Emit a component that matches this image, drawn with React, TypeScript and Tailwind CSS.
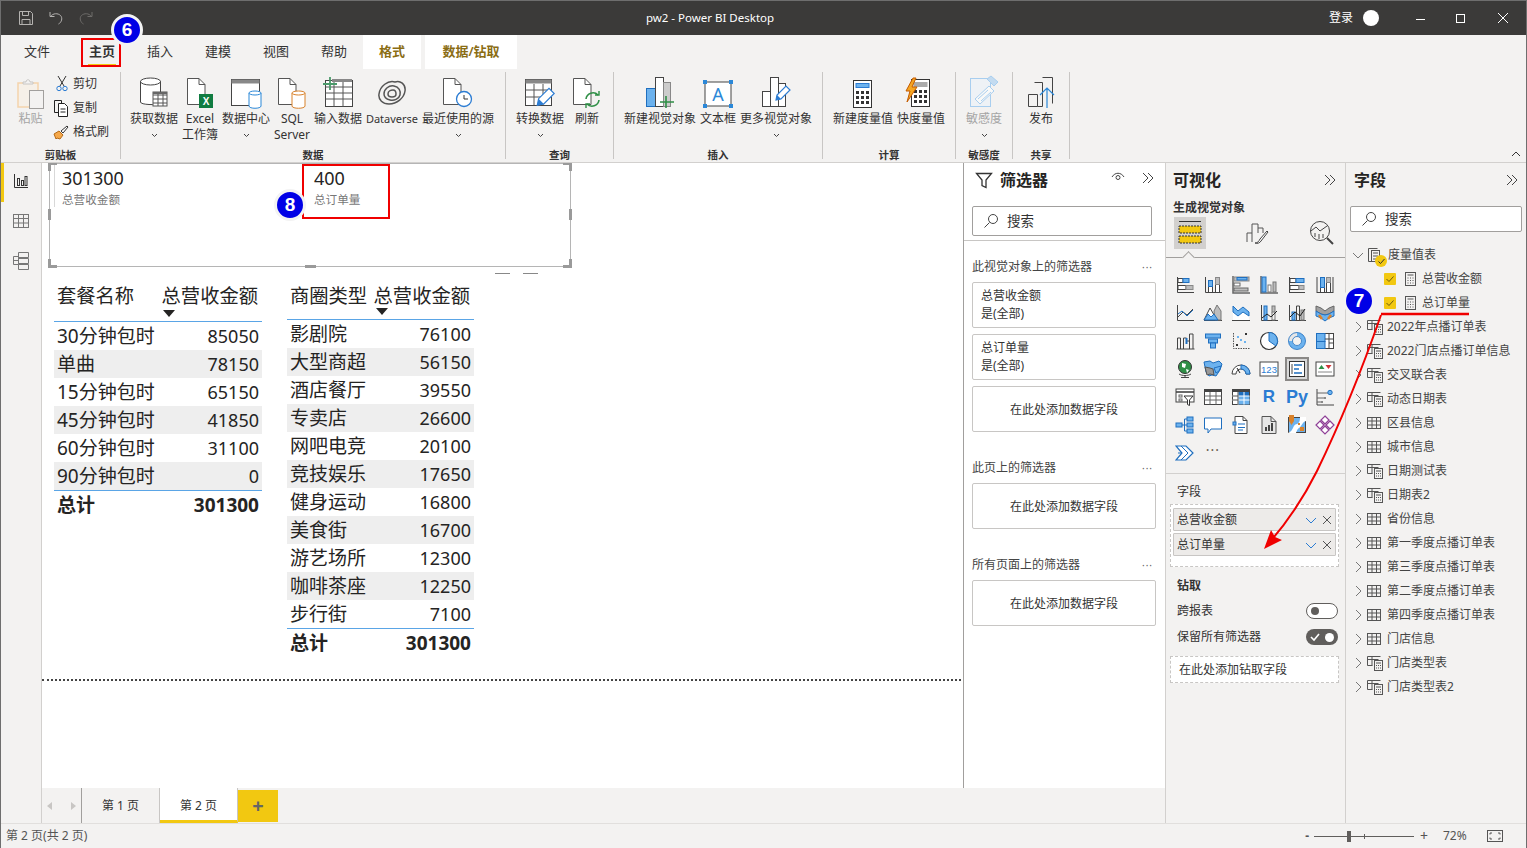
import React from 'react';

const B = '#6cb2ee';
const D = '#1f6fbf';
const K = '#444';
const G = '#bdbdbd';

function Ico({ s = 20, w, h, children, className }: { s?: number; w?: number; h?: number; children: React.ReactNode; className?: string }) {
  const vw = w ?? s;
  const vh = h ?? s;
  return (
    <svg width={vw} height={vh} viewBox={`0 0 ${vw} ${vh}`} fill="none" stroke={K} strokeWidth="1" className={className}>
      {children}
    </svg>
  );
}

const Axis = () => <path d="M2.500 2v15.500H19" stroke="#444" />;

// visual gallery, 6 per row
const vizIcons: React.ReactNode[] = [
  <><Axis /><rect x="3" y="3.500" width="5" height="4" fill="#fff" /><rect x="8" y="3.500" width="6" height="4" fill={B} stroke={D} /><rect x="3" y="10.500" width="8" height="4" fill="#fff" /><rect x="11" y="10.500" width="7" height="4" fill={G} stroke="#888" /></>,
  <><Axis /><rect x="5.500" y="5.500" width="4" height="12" fill="#fff" /><rect x="5.500" y="5.500" width="4" height="6" fill={B} stroke={D} /><rect x="12.500" y="2.500" width="4" height="15" fill="#fff" /><rect x="12.500" y="2.500" width="4" height="7" fill={G} stroke="#888" /></>,
  <><path d="M2 1v17h17" stroke="#666" strokeWidth="1.500" /><rect x="3" y="2" width="15" height="4" fill={G} stroke="#888" /><rect x="6" y="2.500" width="10" height="2.500" fill={B} stroke={D} /><rect x="3" y="8" width="6" height="3" fill="#fff" stroke="#666" /><rect x="3" y="13" width="14" height="3" fill={G} stroke="#666" /></>,
  <><path d="M2 1v17h17" stroke="#666" strokeWidth="1.500" /><rect x="3" y="2" width="4" height="15" fill={B} stroke={D} /><rect x="9" y="10" width="3" height="7" fill="#fff" stroke="#777" /><rect x="14" y="7" width="3" height="10" fill={G} stroke="#777" /></>,
  <><path d="M2.500 2v15.500" stroke="#444" /><path d="M2 17.500h16" stroke="#444" /><rect x="3" y="3.500" width="6" height="4" fill="#fff" /><rect x="9" y="3.500" width="8" height="4" fill={B} stroke={D} /><rect x="3" y="10.500" width="9" height="4" fill="#fff" /><rect x="12" y="10.500" width="5" height="4" fill={G} stroke="#888" /></>,
  <><path d="M2 2v16M18 2v16M2 17.500h16" stroke="#444" /><rect x="5.500" y="2.500" width="4" height="15" fill="#fff" /><rect x="5.500" y="2.500" width="4" height="10" fill={B} stroke={D} /><rect x="11.500" y="2.500" width="4" height="15" fill="#fff" /><rect x="11.500" y="2.500" width="4" height="5" fill={G} stroke="#888" /></>,

  <><Axis /><path d="M3 14l5-5 4 3 6-6" stroke="#444" /><path d="M3 11l4-3 5 5 6-6" stroke={D} /></>,
  <><path d="M1 17.500h18" stroke="#444" /><path d="M11 8l3-6 4 6v9h-6z" fill={G} stroke="#777" /><path d="M1 17l6-12 7 12z" fill="#fff" stroke="#444" /><path d="M1 17l4-6 3 3 3-3 4 6z" fill={B} stroke={D} /></>,
  <><path d="M1 17.500h18" stroke="#444" /><path d="M2 3l5 6 5-3 6 4v7H2z" fill="#fff" stroke="none" /><path d="M2 3l5 5 5-4 6 5v4l-6-4-5 4-5-4z" fill={B} stroke={D} /></>,
  <><Axis /><rect x="5" y="3" width="3" height="14" fill={B} stroke={D} /><rect x="13" y="3" width="3" height="6" fill={G} stroke="#777" /><path d="M13 9v8h3V9" stroke="#777" /><path d="M3 15l5-4 4 3 6-6" stroke="#222" /></>,
  <><Axis /><rect x="5" y="9" width="3" height="8" fill={B} stroke={D} /><path d="M9.500 17V3h3v14" stroke="#444" /><rect x="14" y="7" width="3" height="10" fill={G} stroke="#777" /><path d="M3 14l5-5 5 4 5-7" stroke="#222" /></>,
  <><path d="M1 3l5 2 4 3 4-3 5-2v5l-5 3-4 1-4-1-5-3z" fill="#a0a0a0" stroke="#666" /><path d="M1 8l5 3 4 1 4-1 5-3v5l-5 2-4 3-4-3-5-2z" fill={B} stroke={D} /><path d="M4 12l3 4M16 12l-3 4" stroke="#d9822b" strokeWidth="2.500" /></>,

  <><path d="M1.500 18h18" stroke="#444" /><path d="M2.500 18V7h3v11M8.500 18V7h3v3h3v8" stroke="#444" /><path d="M14.500 10V3h3.500v15" stroke="#444" /><rect x="10.500" y="7" width="2" height="6" fill={D} stroke="none" /></>,
  <><rect x="2.500" y="3" width="15" height="4" fill={B} stroke={D} /><rect x="5.500" y="8" width="9" height="4" fill={B} stroke={D} /><rect x="7.500" y="12" width="5" height="5" fill={B} stroke={D} /></>,
  <><path d="M2.500 2v15.500H19" stroke="#555" strokeDasharray="1.500 1" /><rect x="6" y="5" width="2" height="2" fill={B} stroke="none" /><rect x="9" y="8" width="2" height="2" fill={B} stroke="none" /><rect x="14" y="2" width="2" height="2" fill="#333" stroke="none" /><rect x="5" y="13" width="2" height="2" fill="#333" stroke="none" /><rect x="13" y="10" width="2" height="2" fill={B} stroke="none" /></>,
  <><circle cx="10" cy="10" r="8.500" fill="#fff" stroke="#333" strokeWidth="1.200" /><path d="M10 10V1.500A8.500 8.500 0 0 1 17 15z" fill={B} stroke={D} /></>,
  <><circle cx="10" cy="10" r="6.500" stroke={B} strokeWidth="4" /><path d="M3.500 10A6.500 6.500 0 0 1 10 3.500" stroke="#e6e6e6" strokeWidth="4" /><circle cx="10" cy="10" r="8.500" stroke={D} strokeWidth=".8" /><circle cx="10" cy="10" r="4.500" fill="#f3f2f1" stroke={D} strokeWidth=".8" /></>,
  <><rect x="1.500" y="2.500" width="17" height="15" stroke="#444" fill="#fff" /><rect x="1.500" y="2.500" width="8.500" height="8" fill={B} stroke={D} /><rect x="1.500" y="10.500" width="8.500" height="7" fill={B} stroke={D} /><path d="M14 2.500V17.500M10 8h8.500M14 12h4.500" stroke="#444" /></>,

  <><circle cx="10" cy="8" r="6.500" fill="#2f8f46" stroke="#333" /><path d="M7 4l4 1-1 4-3-1zM11 10l3 1-2 3z" fill="#fff" stroke="none" /><path d="M4 15c3 2 9 2 12 0M10 16v2M6 18.500h8" stroke="#444" /></>,
  <><path d="M1 3l6-1 3 2 6-2 3 3-2 6-4 6-4-1-3 1-3-4z" fill={B} stroke={D} /><path d="M2 8l5 1 3 1 1 6-4-1-3 1z" fill="#999" stroke="#555" /><path d="M11 9l7-2-2 5-3 2z" fill={B} stroke={D} /></>,
  <><path d="M1 15a9 9 0 0 1 18 0h-4a5 5 0 0 0-10 0z" fill="#fff" stroke="#444" /><path d="M10 6a9 9 0 0 1 9 9h-4a5 5 0 0 0-5-5z" fill={B} stroke={D} /><path d="M6 9l3 5" stroke="#222" /></>,
  <><rect x="1" y="3" width="18" height="14" stroke="#444" fill="#fff" /><text x="10" y="14" textAnchor="middle" fontSize="9.500" fill="#2b7cd3" stroke="none" fontFamily="Liberation Sans, sans-serif">123</text></>,
  <><rect x="2.500" y="2.500" width="15" height="15" fill="#fff" stroke="#333" /><path d="M5 5v10" stroke="#444" /><path d="M7 6h8M7 10h5M7 14h8" stroke="#1f6fbf" strokeWidth="1.600" /></>,
  <><rect x="1" y="3" width="18" height="14" fill="#fff" stroke="#444" /><path d="M3.500 10l3-4 3 4z" fill="#2f8f46" stroke="none" /><path d="M10.500 6h6l-3 4z" fill="#d13438" stroke="none" /><path d="M3 13h14" stroke="#888" /></>,

  <><rect x="1" y="2" width="18" height="13" stroke="#444" fill="#fff" /><path d="M1 5h18" stroke="#444" strokeWidth="1.600" /><rect x="4" y="8" width="3" height="2" stroke="#666" /><rect x="4" y="12" width="3" height="2" stroke="#666" /><path d="M9 9h9l-3.500 4v5.500l-2-1V13z" fill="#fff" stroke="#333" /></>,
  <><rect x="1.500" y="2.500" width="17" height="15" stroke="#444" fill="#fff" /><path d="M1.500 4h17" stroke="#444" strokeWidth="2" /><path d="M1.500 9h17M1.500 13h17M7 5v12.500M13 5v12.500" stroke="#666" /></>,
  <><rect x="1.500" y="2.500" width="17" height="15" stroke="#444" fill="#fff" /><rect x="7" y="9" width="11.500" height="8.500" fill={B} stroke="none" /><path d="M1.500 4h17" stroke="#444" strokeWidth="2" /><rect x="7" y="5" width="11" height="4" fill={D} stroke="none" /><path d="M1.500 9h17M1.500 13h17M7 5v12.500M13 5v12.500" stroke="#fff" /><path d="M1.500 9H7M1.500 13H7M7 5v12.500" stroke="#555" /></>,
  null,
  null,
  <><path d="M2 2v16h17" stroke="#444" /><path d="M2 6h11M2 11h7M2 15h4" stroke="#666" /><circle cx="15" cy="5.500" r="2.200" fill={B} stroke={D} /><rect x="9" y="10" width="2" height="2" fill="#888" stroke="none" /><rect x="6" y="14" width="2" height="2" fill="#888" stroke="none" /></>,

  <><rect x="1" y="8" width="6" height="4" fill={B} stroke={D} /><rect x="12" y="2" width="6" height="4" fill={B} stroke={D} /><rect x="12" y="8" width="6" height="4" fill={B} stroke={D} /><rect x="12" y="14" width="6" height="4" fill={B} stroke={D} /><path d="M7 10h5M9.500 4v12M9.500 4H12M9.500 16H12" stroke={D} /></>,
  <><path d="M1.500 3h17v11H8l-3 4v-4H1.500z" fill="#fff" stroke={D} /></>,
  <><path d="M4 1.500h8l4 4v13H4z" fill="#fff" stroke="#444" /><path d="M12 1.500v4h4" stroke="#444" /><rect x="2" y="7" width="3" height="3" fill={B} stroke={D} /><path d="M7 9h7M7 12.500h7M7 15h5" stroke={D} /></>,
  <><path d="M3 1.500h9l5 5v12H3z" fill="#e6e6e6" stroke="#555" /><path d="M12 1.500v5h5" stroke="#555" /><rect x="6" y="12" width="2" height="4" fill="#444" stroke="none" /><rect x="9" y="10" width="2" height="6" fill="#444" stroke="none" /><rect x="12" y="8" width="2" height="8" fill="#444" stroke="none" /></>,
  <><rect x="1.500" y="2.500" width="17" height="15" fill={B} stroke="#444" /><path d="M1 18c6-2 4-8 9-9 3-1 3-5 3-7h6v4c-4 1-4 5-7 7-2 1-3 5-3 5z" fill="#fff" stroke="none" /><path d="M2 0h5v6l-2.500 4L2 6z" fill="#d9822b" stroke="none" /><rect x="13" y="12" width="4" height="4" fill="#d9822b" stroke="none" /><rect x="11" y="8" width="2" height="2" fill="#d9822b" stroke="none" /></>,
  <><g stroke="#8f3f97" strokeWidth="1.200"><path d="M10 1l4 4-4 4-4-4zM10 11l4 4-4 4-4-4zM5 6l4 4-4 4-4-4zM15 6l4 4-4 4-4-4z" fill="#fff" /></g></>,

  <><path d="M1 3h10l7 7-7 7H1l6-7z" fill="#fff" stroke={D} strokeWidth="1.200" /><path d="M6 3l7 7-7 7M3 10h4" stroke={D} /></>,
];

function VizGrid() {
  return (
    <div className="grid grid-cols-[repeat(6,28px)] auto-rows-[28px] ml-[5px] mt-[13px]">
      {vizIcons.map((ic, i) => {
        if (i === 27) return <div key={i} className="flex items-center justify-center text-[17px] font-bold text-[#2b7cd3] font-['Liberation_Sans']">R</div>;
        if (i === 28) return <div key={i} className="flex items-center justify-center text-[18px] font-bold text-[#2b7cd3] font-['Liberation_Sans']">Py</div>;
        return (
          <div key={i} className="flex items-center justify-center">
            {i === 22 ? (
              <div className="w-[24px] h-[24px] bg-[#d8d8d8] border-2 border-[#8a8886] flex items-center justify-center">
                <Ico>{ic}</Ico>
              </div>
            ) : (
              <Ico>{ic}</Ico>
            )}
          </div>
        );
      })}
      <div className="flex items-start justify-center text-[14px] leading-[14px] tracking-[1px] text-[#6b5f50] pt-[4px]">···</div>
    </div>
  );
}

function Chevrons() {
  return (
    <Ico s={14}>
      <path d="M2 2l5 5-5 5M7 2l5 5-5 5" stroke="#444" />
    </Ico>
  );
}

function SearchBox({ className }: { className: string }) {
  return (
    <div className={`flex items-center bg-white border border-[#a19f9d] rounded-[2px] text-[13.500px] text-[#333] ${className}`}>
      <Ico s={16} className="ml-[10px] mr-[8px]">
        <circle cx="10" cy="6" r="4.500" stroke="#444" />
        <path d="M6.500 9.500L1.500 14.500" stroke="#444" />
      </Ico>
      搜索
    </div>
  );
}

function Caret() {
  return (
    <svg width="7" height="5" viewBox="0 0 7 5">
      <path d="M1 1l2.500 2.500L6 1" stroke="#444" fill="none" />
    </svg>
  );
}

function RibbonBtn({ w, icon, label, label2, caret, dim, small }: { w: string; icon: React.ReactNode; label: string; label2?: string; caret?: boolean; dim?: boolean; small?: boolean }) {
  return (
    <div className={`${w} flex flex-col items-center shrink-0`}>
      <div className="h-[36px] pb-[1px] flex items-end justify-center">{icon}</div>
      <div className={`mt-[1px] leading-[16px] whitespace-nowrap ${small ? 'text-[11px]' : 'text-[12px]'} ${dim ? 'text-[#a5a5a5]' : 'text-[#333]'}`}>{label}</div>
      {label2 && <div className="text-[12px] leading-[16px] whitespace-nowrap text-[#333]">{label2}</div>}
      {caret && <div className="h-[16px] flex items-center"><Caret /></div>}
    </div>
  );
}

function RibbonGroup({ w, pl, label, children }: { w: string; pl: string; label: string; children: React.ReactNode }) {
  return (
    <div className={`${w} relative border-r border-[#c8c6c4] my-[3px] shrink-0`}>
      <div className={`flex ${pl} pt-[2px]`}>{children}</div>
      <div className="absolute left-0 right-0 bottom-[-2px] h-[12px] leading-[12px] text-center text-[10.500px] font-semibold text-[#333] whitespace-nowrap">{label}</div>
    </div>
  );
}

const Doc = ({ fill = '#fff' }: { fill?: string }) => (
  <>
    <path d="M1.500 1.500H13l6 6v20H1.500z" fill={fill} stroke="#555" />
    <path d="M13 1.500v6h6" stroke="#555" />
  </>
);

const Cyl = ({ x, y, w, h, c }: { x: number; y: number; w: number; h: number; c: string }) => (
  <>
    <path d={`M${x} ${y + 2}v${h}c0 3 ${w} 3 ${w} 0v-${h}`} fill="#fff" stroke={c} />
    <ellipse cx={x + w / 2} cy={y + 2} rx={w / 2} ry="2" fill="#fff" stroke={c} />
  </>
);

const MiniGrid = ({ x, y }: { x: number; y: number }) => (
  <>
    <rect x={x} y={y} width="14" height="14" fill="#fff" stroke="#555" />
    <path d={`M${x} ${y + 3}h14M${x} ${y + 7}h14M${x} ${y + 11}h14M${x + 5} ${y}v14M${x + 10} ${y}v14`} stroke="#555" />
    <path d={`M${x} ${y + 1}h14`} stroke="#666" strokeWidth="2" />
  </>
);

const Pencil = ({ x, y }: { x: number; y: number }) => (
  <g transform={`translate(${x} ${y})`}>
    <path d="M1 14l1-5 9-9 4 4-9 9z" fill="#fff" stroke="#2b7cd3" strokeWidth="1.200" />
    <path d="M1 14l1-5 4 4z" fill="#2b7cd3" stroke="none" />
  </g>
);

const Calc = ({ x = 0, y = 0, big }: { x?: number; y?: number; big?: boolean }) => (
  <g transform={`translate(${x} ${y})`}>
    <rect x=".5" y=".5" width="18" height="27" fill="#fff" stroke="#333" />
    <rect x="3" y="3.500" width="13" height="4" fill={big ? '#aaa' : B} stroke={big ? '#aaa' : '#2b7cd3'} />
    {[11, 16, 21].map((yy) => [3, 8, 13].map((xx) => <rect key={`${xx}${yy}`} x={xx} y={yy} width="3" height="3" fill="#333" stroke="none" />))}
  </g>
);

const rbIcons = {
  get: (
    <Ico w={30} h={32}>
      <path d="M1.500 4v21c0 3 16 3 20 2V4" fill="#fff" stroke="#444" />
      <ellipse cx="11.500" cy="4.500" rx="10" ry="3.500" fill="#fff" stroke="#444" />
      <MiniGrid x={14} y={15} />
    </Ico>
  ),
  excel: (
    <Ico w={28} h={32}>
      <Doc />
      <rect x="13" y="17" width="14" height="14" fill="#107c41" stroke="none" />
      <text x="20" y="28" textAnchor="middle" fontSize="10" fontWeight="bold" fill="#fff" stroke="none" fontFamily="Liberation Sans, sans-serif">X</text>
    </Ico>
  ),
  hub: (
    <Ico w={32} h={32}>
      <rect x="1.500" y="2.500" width="28" height="26" fill="#fff" stroke="#444" />
      <path d="M1.500 4.500h28" stroke="#888" strokeWidth="4" />
      <Cyl x={19} y={14} w={12} h={13} c="#2b88d8" />
    </Ico>
  ),
  sql: (
    <Ico w={30} h={32}>
      <Doc />
      <Cyl x={15} y={14} w={13} h={13} c="#d9822b" />
    </Ico>
  ),
  enter: (
    <Ico w={32} h={32}>
      <rect x="3.500" y="3.500" width="27" height="26" fill="#fff" stroke="#444" />
      <path d="M3.500 10h27M3.500 16h27M3.500 22h27M12 3.500v26M21 3.500v26" stroke="#555" />
      <path d="M10 3.500h20" stroke="#888" strokeWidth="3" />
      <path d="M8 0v13M1 7h14" stroke="#4a9a6a" strokeWidth="1.800" />
    </Ico>
  ),
  dv: (
    <Ico w={30} h={26} className="mb-[3px]">
      <path d="M2 14C3 6 11 0 18 2c5-2 11 2 10 9-1 7-8 13-16 13C6 24 1 20 2 14z" stroke="#555" strokeWidth="1.500" />
      <path d="M7 14c0-5 5-9 10-8s7 5 6 9-6 6-10 5-6-3-6-6z" stroke="#555" strokeWidth="1.500" />
      <path d="M11 14c0-3 3-4 5-4s3 2 3 4-2 3-4 3-4-1-4-3z" stroke="#555" strokeWidth="1.500" />
    </Ico>
  ),
  recent: (
    <Ico w={32} h={32}>
      <Doc />
      <circle cx="22" cy="22" r="7.500" fill="#fff" stroke="#2b7cd3" strokeWidth="1.300" />
      <path d="M22 18v4h4" stroke="#333" />
    </Ico>
  ),
  transform: (
    <Ico w={32} h={32}>
      <rect x="1.500" y="2.500" width="26" height="26" fill="#fff" stroke="#444" />
      <path d="M1.500 4.500h26" stroke="#888" strokeWidth="4" />
      <path d="M1.500 13h26M1.500 20h26M10 7v21M19 7v21" stroke="#555" />
      <g transform="translate(12 10) scale(1.300)"><path d="M1 14l1-5 8-8 4 4-8 8z" fill="#fff" stroke="#2b7cd3" strokeWidth=".9" /><path d="M1 14l1-5 4 4z" fill="#2b7cd3" stroke="none" /></g>
    </Ico>
  ),
  refresh: (
    <Ico w={30} h={32}>
      <Doc />
      <path d="M14 22a7 7 0 0 1 12-4M27 23a7 7 0 0 1-12 4" stroke="#2f8f46" strokeWidth="1.600" fill="none" />
      <path d="M23 18h4v-4M18 27h-4v4" stroke="#2f8f46" strokeWidth="1.400" fill="none" />
    </Ico>
  ),
  newVisual: (
    <Ico w={30} h={34}>
      <rect x="1.500" y="13.500" width="9" height="18" fill={B} stroke="#1f6fbf" />
      <rect x="10.500" y="2.500" width="8" height="29" fill="#fff" stroke="#444" />
      <rect x="18.500" y="7.500" width="7" height="24" fill="#ccc" stroke="#888" />
      <path d="M21 21v12M15 27h14" stroke="#2f8f46" strokeWidth="1.600" />
    </Ico>
  ),
  text: (
    <Ico w={32} h={30}>
      <rect x="3" y="3" width="26" height="24" fill="#fff" stroke="#444" />
      {[[3, 3], [29, 3], [3, 27], [29, 27]].map(([cx, cy]) => <rect key={`${cx}${cy}`} x={cx - 2} y={cy - 2} width="4" height="4" fill="#2b88d8" stroke="none" />)}
      <text x="16" y="22" textAnchor="middle" fontSize="18" fill="#2b88d8" stroke="none" fontFamily="Noto Sans, sans-serif">A</text>
    </Ico>
  ),
  moreVisual: (
    <Ico w={32} h={34} className="ml-[2px]">
      <rect x="1.500" y="16.500" width="8" height="15" fill="#fff" stroke="#444" />
      <rect x="9.500" y="2.500" width="8" height="29" fill="#fff" stroke="#444" />
      <rect x="17.500" y="8.500" width="7" height="23" fill="#fff" stroke="#444" />
      <Pencil x={14} y={11} />
    </Ico>
  ),
  measure: <Ico w={20} h={30}><Calc y={1} /></Ico>,
  quick: (
    <Ico w={28} h={32} className="-ml-[8px]">
      <Calc x={8} y={2} big />
      <path d="M10 1L3 14h4l-3 11 10-15H9l4-9z" fill="#f5a623" stroke="#c45b00" />
    </Ico>
  ),
  sens: (
    <svg width="30" height="34" viewBox="0 0 30 34" fill="none" opacity=".55">
      <rect x="1.500" y="3.500" width="20" height="28" fill="#eaf3fb" stroke={B} />
      <path d="M6 24l14-13 5 5-14 13z" fill="#fff" stroke={B} />
      <path d="M9 24l10-9M12 26l10-9" stroke={B} />
      <path d="M18 4l7 7 4-4-7-6z" fill="#9ccaf0" stroke={B} />
    </svg>
  ),
  publish: (
    <Ico w={30} h={34} className="ml-[2px]">
      <path d="M1.500 19.500h9v12h-9zM7.500 7.500h8v24h-5M15.500 2.500h10v26" stroke="#444" />
      <path d="M20 33V14M13 20l7-7 7 7" stroke="#2b88d8" strokeWidth="1.200" />
    </Ico>
  ),
};

function SmallIcon({ children }: { children: React.ReactNode }) {
  return <span className="w-[14px] flex justify-end [&>svg]:shrink-0">{children}</span>;
}

function Ribbon() {
  return (
    <div className="h-[93px] flex bg-[#f3f2f1] relative shrink-0">
      <RibbonGroup w="w-[120px]" pl="pl-[13px]" label="剪贴板">
        <div className="w-[33px] flex flex-col items-center">
          <div className="h-[36px] flex items-end">
            <svg width="30" height="32" viewBox="0 0 30 32" fill="none">
              <path d="M2 5h20v24H2z" fill="#f6f0e8" stroke="#f5d3ac" strokeWidth="1.500" />
              <path d="M7 6V4h3c0-3 4-3 4 0h3v2z" fill="#f3f2f1" stroke="#c8c6c4" />
              <rect x="13.500" y="12.500" width="14" height="18" fill="#f3f2f1" stroke="#a19f9d" />
            </svg>
          </div>
          <div className="mt-[1px] text-[12px] leading-[16px] text-[#a5a5a5]">粘贴</div>
        </div>
        <div className="ml-[8px] flex flex-col text-[12px] text-[#333] leading-[16px] pt-[2px] gap-[7.500px]">
          <div className="flex items-center gap-[4px]">
            <SmallIcon>
              <Ico w={14} h={16}><path d="M3 0l6 10M11 0L5 10" stroke="#333" /><circle cx="4" cy="12.500" r="2.200" stroke="#2b7cd3" /><circle cx="10" cy="12.500" r="2.200" stroke="#2b7cd3" /></Ico>
            </SmallIcon>
            剪切
          </div>
          <div className="flex items-center gap-[4px]">
            <SmallIcon>
              <Ico w={16} h={17}><path d="M5 12.500H1.500V.5h7v3" stroke="#222" /><path d="M5.500 3.500h6l3 3v10h-9z" fill="#fff" stroke="#222" /><path d="M7.500 9h5M7.500 12h5" stroke="#222" /></Ico>
            </SmallIcon>
            复制
          </div>
          <div className="flex items-center gap-[4px]">
            <SmallIcon>
              <Ico w={16} h={15}><path d="M1 9l5-3 4 4-3 4-3-1-1 1z" fill="#f5a84a" stroke="#b56a17" /><path d="M8 6l6-5 1 1-5 6z" fill="#fff" stroke="#333" /></Ico>
            </SmallIcon>
            格式刷
          </div>
        </div>
      </RibbonGroup>
      <RibbonGroup w="w-[385px]" pl="pl-[7px]" label="数据">
        <RibbonBtn w="w-[52px]" icon={rbIcons.get} label="获取数据" caret />
        <RibbonBtn w="w-[40px]" icon={rbIcons.excel} label="Excel" label2="工作簿" />
        <RibbonBtn w="w-[52px]" icon={rbIcons.hub} label="数据中心" caret />
        <RibbonBtn w="w-[40px]" icon={rbIcons.sql} label="SQL" label2="Server" />
        <RibbonBtn w="w-[52px]" icon={rbIcons.enter} label="输入数据" />
        <RibbonBtn w="w-[56px]" icon={rbIcons.dv} label="Dataverse" small />
        <RibbonBtn w="w-[76px]" icon={rbIcons.recent} label="最近使用的源" caret />
      </RibbonGroup>
      <RibbonGroup w="w-[108px]" pl="pl-[8px]" label="查询">
        <RibbonBtn w="w-[52px]" icon={rbIcons.transform} label="转换数据" caret />
        <RibbonBtn w="w-[42px]" icon={rbIcons.refresh} label="刷新" />
      </RibbonGroup>
      <RibbonGroup w="w-[209px]" pl="pl-[8px]" label="插入">
        <RibbonBtn w="w-[76px]" icon={rbIcons.newVisual} label="新建视觉对象" />
        <RibbonBtn w="w-[40px]" icon={rbIcons.text} label="文本框" />
        <RibbonBtn w="w-[76px]" icon={rbIcons.moreVisual} label="更多视觉对象" caret />
      </RibbonGroup>
      <RibbonGroup w="w-[133px]" pl="pl-[8px]" label="计算">
        <RibbonBtn w="w-[64px]" icon={rbIcons.measure} label="新建度量值" />
        <RibbonBtn w="w-[52px]" icon={rbIcons.quick} label="快度量值" />
      </RibbonGroup>
      <RibbonGroup w="w-[57px]" pl="pl-[2px]" label="敏感度">
        <RibbonBtn w="w-[52px]" icon={rbIcons.sens} label="敏感度" caret dim />
      </RibbonGroup>
      <RibbonGroup w="w-[57px]" pl="pl-[8px]" label="共享">
        <RibbonBtn w="w-[40px]" icon={rbIcons.publish} label="发布" />
      </RibbonGroup>
      <svg width="10" height="6" viewBox="0 0 10 6" className="absolute right-[5px] bottom-[5px]" fill="none">
        <path d="M1 5l4-4 4 4" stroke="#333" />
      </svg>
    </div>
  );
}

function TitleBar() {
  return (
    <div className="h-[34px] bg-[#3b3a39] flex items-center relative shrink-0 text-white text-[12px]">
      <div className="flex items-center pl-[17px] gap-[14px]">
        <Ico s={16}>
          <path d="M1.500 1.500h11l2 2v11h-13z" stroke="#b5b3b1" />
          <path d="M4.500 1.500v4h6v-4M4 14.500v-5h8v5" stroke="#b5b3b1" />
        </Ico>
        <Ico s={16}>
          <path d="M2 2v4.500h4.500M2.500 6.500C5 3 10 3 12.500 5.500s1 7-2 8.500" stroke="#b5b3b1" />
        </Ico>
        <Ico s={16}>
          <path d="M14 2v4.500H9.500M13.500 6.500C11 3 6 3 3.500 5.500s-1 7 2 8.500" stroke="#6e6c6a" />
        </Ico>
      </div>
      <div className="flex-1 text-center ml-[-3px] text-[11.500px]">pw2 - Power BI Desktop</div>
      <div className="flex items-center">
        <span>登录</span>
        <span className="w-[16px] h-[16px] rounded-full bg-white ml-[10px] mr-[36px]" />
        <Ico s={11} className="mr-[29px]"><path d="M1 6.500h9" stroke="#fff" /></Ico>
        <Ico s={11} className="mr-[31px]"><rect x="1.500" y="1.500" width="8" height="8" stroke="#fff" /></Ico>
        <Ico s={12} className="mr-[17px]"><path d="M1 1l10 10M11 1L1 11" stroke="#fff" /></Ico>
      </div>
    </div>
  );
}

function Tab({ w, label, active, ctx }: { w: string; label: string; active?: boolean; ctx?: boolean }) {
  return (
    <div className={`${w} h-full flex items-center justify-center relative text-[13px] shrink-0 ${ctx ? 'bg-white font-semibold text-[#8a6d14]' : 'text-[#333]'} ${active ? 'font-semibold' : ''}`}>
      {label}
      {active && <span className="absolute left-[15px] right-[15px] bottom-[3px] h-[2px] bg-[#f2c811]" />}
    </div>
  );
}

function TabRow() {
  return (
    <div className="h-[34px] bg-[#f3f2f1] flex items-stretch pl-[7px] shrink-0">
      <Tab w="w-[58px]" label="文件" />
      <div className="w-[7px]" />
      <Tab w="w-[58px]" label="主页" active />
      <Tab w="w-[58px]" label="插入" />
      <Tab w="w-[58px]" label="建模" />
      <Tab w="w-[58px]" label="视图" />
      <Tab w="w-[58px]" label="帮助" />
      <Tab w="w-[58px]" label="格式" ctx />
      <div className="w-[4px]" />
      <Tab w="w-[92px]" label="数据/钻取" ctx />
    </div>
  );
}

function LeftNav() {
  return (
    <div className="w-[41px] bg-[#f3f2f1] border-r border-[#d2d0ce] shrink-0 flex flex-col items-center relative">
      <span className="absolute left-0 top-0 w-[3px] h-[39px] bg-[#f2c811]" />
      <div className="mt-[10px]">
        <Ico s={16}>
          <path d="M1.500 1v13.500H15" stroke="#333" />
          <rect x="4.500" y="5.500" width="2" height="7" stroke="#333" />
          <rect x="8.500" y="7.500" width="2" height="5" stroke="#333" />
          <rect x="12" y="3.500" width="2" height="9" stroke="#333" />
        </Ico>
      </div>
      <div className="mt-[24px]">
        <Ico s={16}>
          <rect x=".5" y="1.500" width="15" height="13" stroke="#777" />
          <path d="M.5 5.500h15M.5 10h15M5.500 1.500v13M10.500 1.500v13" stroke="#777" />
        </Ico>
      </div>
      <div className="mt-[22px]">
        <Ico w={18} h={20}>
          <path d="M6.500 1.500h10v5h-10zM6.500 13.500h10v5h-10zM6.500 7.500h10v5h-10zM1.500 5.500h5v8h-5zM1.500 9.500h5" stroke="#777" />
        </Ico>
      </div>
    </div>
  );
}

type Row = [string, string];

function DataTable({ col1, rows, total, w, top, sortPad }: { col1: string; rows: Row[]; total: string; w: string; top: string; sortPad: string }) {
  return (
    <div className={`${w} shrink-0 text-[#252423]`}>
      <div className={`${top} relative border-b border-[#5aa5e6] flex justify-between pl-[3px] pr-[4px] text-[19.300px] leading-[26px]`}>
        <span>{col1}</span>
        <span>总营收金额</span>
        <span className={`absolute ${sortPad} bottom-[4px] w-0 h-0 border-l-[6px] border-r-[6px] border-t-[7px] border-l-transparent border-r-transparent border-t-[#252423]`} />
      </div>
      {rows.map(([a, b], i) => (
        <div key={a} className={`h-[28px] flex items-center justify-between px-[3px] text-[19px] ${i % 2 === 1 ? 'bg-[#eeeeee]' : 'bg-white'}`}>
          <span>{a}</span>
          <span className="text-[18px] font-['Noto_Sans']">{b}</span>
        </div>
      ))}
      <div className="h-[29px] border-t border-[#5aa5e6] flex items-center justify-between px-[3px] text-[19px] font-bold">
        <span>总计</span>
        <span>{total}</span>
      </div>
    </div>
  );
}

const table1: Row[] = [
  ['30分钟包时', '85050'],
  ['单曲', '78150'],
  ['15分钟包时', '65150'],
  ['45分钟包时', '41850'],
  ['60分钟包时', '31100'],
  ['90分钟包时', '0'],
];

const table2: Row[] = [
  ['影剧院', '76100'],
  ['大型商超', '56150'],
  ['酒店餐厅', '39550'],
  ['专卖店', '26600'],
  ['网吧电竞', '20100'],
  ['竞技娱乐', '17650'],
  ['健身运动', '16800'],
  ['美食街', '16700'],
  ['游艺场所', '12300'],
  ['咖啡茶座', '12250'],
  ['步行街', '7100'],
];

function Handle({ className }: { className: string }) {
  return <span className={`absolute bg-[#9a9a9a] ${className}`} />;
}

function Canvas() {
  return (
    <div className="flex-1 bg-white min-w-0 overflow-hidden">
      <div className="h-[518px] border-b-2 border-dotted border-[#444] w-[919px] relative">
        <div className="relative ml-[7px] w-[522px] h-[104px] border border-[#b5b5b5] flex">
          <div className="w-[253px] ml-[4px] border-l border-[#d8d8d8] h-[42px] mt-[1px] pl-[7px] text-[#252423]">
            <div className="text-[18px] leading-[26px]">301300</div>
            <div className="text-[11.600px] leading-[14px] text-[#777] mt-[2px]">总营收金额</div>
          </div>
          <div className="pl-[7px] text-[#252423] mt-[1px]">
            <div className="text-[18px] leading-[26px]">400</div>
            <div className="text-[11.600px] leading-[14px] text-[#777] mt-[2px]">总订单量</div>
          </div>
          <Handle className="left-[-2px] top-[-2px] w-[9px] h-[3px]" />
          <Handle className="left-[-2px] top-[-2px] w-[3px] h-[9px]" />
          <Handle className="right-[-2px] top-[-2px] w-[9px] h-[3px]" />
          <Handle className="right-[-2px] top-[-2px] w-[3px] h-[9px]" />
          <Handle className="left-[-2px] bottom-[-2px] w-[9px] h-[3px]" />
          <Handle className="left-[-2px] bottom-[-2px] w-[3px] h-[9px]" />
          <Handle className="right-[-2px] bottom-[-2px] w-[9px] h-[3px]" />
          <Handle className="right-[-2px] bottom-[-2px] w-[3px] h-[9px]" />
          <Handle className="left-[-2px] top-[45px] w-[3px] h-[11px]" />
          <Handle className="right-[-2px] top-[45px] w-[3px] h-[11px]" />
          <Handle className="left-[255px] bottom-[-2px] w-[11px] h-[3px]" />
          <span className="absolute left-[445px] bottom-[-8px] w-[15px] h-[1px] bg-[#888]" />
          <span className="absolute left-[473px] bottom-[-8px] w-[15px] h-[1px] bg-[#888]" />
        </div>
        <div className="flex ml-[12px] mt-[16px] gap-[25px] items-start">
          <DataTable col1="套餐名称" rows={table1} total="301300" w="w-[208px]" top="h-[39px]" sortPad="left-[109px]" />
          <DataTable col1="商圈类型" rows={table2} total="301300" w="w-[187px]" top="h-[37px]" sortPad="left-[89px]" />
        </div>
      </div>
    </div>
  );
}

function FilterCard({ a, b }: { a: string; b?: string }) {
  return (
    <div className={`h-[46px] bg-white border border-[#c8c6c4] rounded-[2px] text-[12px] text-[#333] leading-[18px] flex flex-col ${b ? 'justify-center pl-[8px]' : 'items-center justify-center pt-[2px]'}`}>
      <div>{a}</div>
      {b && <div>{b}</div>}
    </div>
  );
}

function FilterHead({ label, mt }: { label: string; mt: string }) {
  return (
    <div className={`flex items-center justify-between h-[16px] ${mt} mb-[7px] text-[12px] text-[#444]`}>
      {label}
      <span className="mr-[3px] text-[#666] tracking-[1px] text-[10px]">···</span>
    </div>
  );
}

function FilterPanel() {
  return (
    <div className="w-[202px] shrink-0 bg-white border-l border-[#a19f9d]">
      <div className="h-[43px] flex items-start pt-[5px] pl-[11px] pr-[10px]">
        <Ico s={18} className="mt-[3px]"><path d="M1.500 2.500h15L11 9v7.500l-4-2V9z" stroke="#333" strokeWidth="1.300" /></Ico>
        <span className="ml-[7px] text-[16px] font-semibold text-[#252423]">筛选器</span>
        <span className="ml-auto mr-[16px] mt-[3px]">
          <Ico w={14} h={12}><path d="M1 6c3-5 9-5 12 0" stroke="#444" /><circle cx="7" cy="6.500" r="2" stroke="#444" /></Ico>
        </span>
        <span className="mt-[3px]"><Chevrons /></span>
      </div>
      <SearchBox className="h-[30px] ml-[8px] w-[180px]" />
      <div className="border-t border-[#c8c6c4] mt-[4px] pl-[8px] pr-[9px]">
        <FilterHead label="此视觉对象上的筛选器" mt="mt-[18px]" />
        <div className="flex flex-col gap-[6px]">
          <FilterCard a="总营收金额" b="是(全部)" />
          <FilterCard a="总订单量" b="是(全部)" />
          <FilterCard a="在此处添加数据字段" />
        </div>
        <FilterHead label="此页上的筛选器" mt="mt-[28px]" />
        <FilterCard a="在此处添加数据字段" />
        <FilterHead label="所有页面上的筛选器" mt="mt-[28px]" />
        <FilterCard a="在此处添加数据字段" />
      </div>
    </div>
  );
}

function PageTabs() {
  return (
    <div className="h-[35px] bg-[#f3f2f1] flex items-stretch shrink-0 text-[12px] text-[#333]">
      <div className="w-[40px] flex items-center justify-between px-[5px] border-r border-[#a19f9d]">
        <span className="w-0 h-0 border-y-[4px] border-r-[5px] border-y-transparent border-r-[#c8c6c4]" />
        <span className="w-0 h-0 border-y-[4px] border-l-[5px] border-y-transparent border-l-[#c8c6c4]" />
      </div>
      <div className="w-[78px] flex items-center justify-center border-r border-[#c8c6c4]">第 1 页</div>
      <div className="w-[78px] flex items-center justify-center border-r border-[#c8c6c4] bg-white border-b-[3px] border-b-[#f2c811] pt-[3px]">第 2 页</div>
      <div className="w-[40px] h-[32px] mt-[2px] bg-[#f2c811] flex items-center justify-center text-[#666] text-[20px] font-bold">+</div>
    </div>
  );
}

function ToggleRow({ label, on }: { label: string; on?: boolean }) {
  return (
    <div className="h-[26px] flex items-center justify-between text-[12px] text-[#333] pr-[1px]">
      {label}
      {on ? (
        <span className="w-[32px] h-[16px] rounded-full bg-[#605e5c] flex items-center justify-between px-[4px]">
          <Ico s={10}><path d="M1 5l3 3 5-6" stroke="#fff" strokeWidth="1.600" /></Ico>
          <span className="w-[9px] h-[9px] rounded-full bg-white" />
        </span>
      ) : (
        <span className="w-[32px] h-[16px] rounded-full bg-white border border-[#605e5c] flex items-center pl-[4px]">
          <span className="w-[8px] h-[8px] rounded-full bg-[#605e5c]" />
        </span>
      )}
    </div>
  );
}

function Well({ label }: { label: string }) {
  return (
    <div className="h-[23px] bg-[#edebe9] border border-[#c8c6c4] rounded-[1px] flex items-center justify-between text-[12px] text-[#333] pl-[3px] pr-[3px]">
      {label}
      <span className="flex items-center gap-[5px]">
        <Ico s={12}><path d="M1 4l5 5 5-5" stroke="#2b7cd3" /></Ico>
        <Ico s={10}><path d="M1 1l8 8M9 1L1 9" stroke="#555" /></Ico>
      </span>
    </div>
  );
}

function VizPanel() {
  return (
    <div className="w-[181px] shrink-0 bg-[#f3f2f1] border-l border-r border-[#d2d0ce]">
      <div className="h-[30px] flex items-center justify-between pl-[7px] pr-[8px] mt-[2px] text-[16px] font-semibold text-[#252423]">
        可视化
        <Chevrons />
      </div>
      <div className="pl-[7px] text-[12px] font-semibold text-[#333] leading-[16px] mt-[5px]">生成视觉对象</div>
      <div className="flex items-center justify-between pl-[8px] pr-[10px] mt-[1px] h-[32px]">
        <div className="w-[32px] h-[32px] bg-[#d2d0ce] flex items-center justify-center">
          <Ico w={24} h={26}>
            <path d="M1 1.500h22" stroke="#333" />
            <rect x="1" y="6" width="22" height="7" fill="#f2c811" stroke="#333" strokeDasharray="2 1" />
            <rect x="1" y="16" width="22" height="7" fill="#f2c811" stroke="#333" strokeDasharray="2 1" />
          </Ico>
        </div>
        <Ico w={26} h={26}>
          <path d="M2 22v-9h5v9M7 13V4h6v9M13 8h5v5" stroke="#555" />
          <path d="M10 23c3 0 4-2 5-4l7-8 1 1-7 9c-1 2-4 3-6 2z" fill="#fff" stroke="#444" />
        </Ico>
        <Ico w={26} h={26}>
          <circle cx="11" cy="11" r="9.500" stroke="#444" />
          <path d="M6 17v-4M10 19v-5M14 18v-4M2 11l5-4 4 4 7-5" stroke="#444" />
          <path d="M18 18l6 6" stroke="#444" strokeWidth="2" />
        </Ico>
      </div>
      <div className="relative mt-[8px] border-t border-[#a19f9d]">
        <span className="absolute left-[18px] top-[-5px] w-[9px] h-[9px] rotate-45 bg-[#f3f2f1] border-l border-t border-[#a19f9d]" />
      </div>
      <VizGrid />
      <div className="border-t border-[#d2d0ce] mt-[6px] pl-[4px] pr-[6px]">
        <div className="pl-[7px] mt-[10px] h-[16px] text-[12px] leading-[16px] text-[#333]">字段</div>
        <div className="mt-[4px] border border-dashed border-[#c8c6c4] h-[63px] bg-white p-[2px] pt-[3px] flex flex-col gap-[2px]">
          <Well label="总营收金额" />
          <Well label="总订单量" />
        </div>
        <div className="pl-[7px] mt-[11px] h-[16px] text-[12px] leading-[16px] font-semibold text-[#333]">钻取</div>
        <div className="pl-[7px] mt-[4px]">
          <ToggleRow label="跨报表" />
          <ToggleRow label="保留所有筛选器" on />
        </div>
        <div className="mt-[6px] h-[27px] bg-white border border-dashed border-[#c8c6c4] flex items-center pl-[8px] text-[12px] text-[#333]">
          在此处添加钻取字段
        </div>
      </div>
    </div>
  );
}

const TableIco = () => (
  <Ico w={15} h={13}>
    <rect x=".5" y=".5" width="13" height="11" stroke="#555" />
    <path d="M.5 4h13M.5 8h13M5 .5v11M9.500 .5v11" stroke="#555" />
  </Ico>
);

const CalcTableIco = () => (
  <Ico w={16} h={16}>
    <path d="M.5 1.500h13M.5 4.500h11M.5 1.500v9h5M5 1.500v9" stroke="#555" />
    <rect x="7.500" y="5.500" width="8" height="10" fill="#f3f2f1" stroke="#555" />
    <path d="M9 8h5M9 10.500h1M11 10.500h1M13 10.500h1M9 13h1M11 13h1M13 13h1" stroke="#555" />
  </Ico>
);

function CheckBox() {
  return (
    <span className="w-[12px] h-[12px] bg-[#f2c811] rounded-[1px] flex items-center justify-center shrink-0">
      <Ico s={8}><path d="M.5 4l2.500 2.500L7.500 1.500" stroke="#6b5a10" /></Ico>
    </span>
  );
}

function Arrow({ open }: { open?: boolean }) {
  return (
    <Ico s={12} className="shrink-0">
      {open ? <path d="M1 4l5 5 5-5" stroke="#777" /> : <path d="M4 1l5 5-5 5" stroke="#777" />}
    </Ico>
  );
}

const treeItems: [string, boolean][] = [
  ['2022年点播订单表', true],
  ['2022门店点播订单信息', true],
  ['交叉联合表', true],
  ['动态日期表', true],
  ['区县信息', false],
  ['城市信息', false],
  ['日期测试表', true],
  ['日期表2', true],
  ['省份信息', false],
  ['第一季度点播订单表', false],
  ['第三季度点播订单表', false],
  ['第二季度点播订单表', false],
  ['第四季度点播订单表', false],
  ['门店信息', false],
  ['门店类型表', true],
  ['门店类型表2', true],
];

function FieldPanel() {
  return (
    <div className="flex-1 bg-[#f3f2f1]">
      <div className="h-[34px] flex items-center justify-between pl-[8px] pr-[7px] text-[16px] font-semibold text-[#252423]">
        字段
        <Chevrons />
      </div>
      <SearchBox className="h-[26px] ml-[4px] w-[172px] mt-[9px]" />
      <div className="mt-[11px] text-[12px] text-[#444] pl-[6px]">
        <div className="h-[24px] flex items-center">
          <Arrow open />
          <span className="relative w-[15px] h-[16px] ml-[4px]">
            <Ico w={13} h={16}><path d="M.5 1.500h9M.5 1.500v13h4" stroke="#555" /><rect x="3.500" y="3.500" width="8" height="11" fill="#f3f2f1" stroke="#555" /><path d="M5 6h5M5 9h5M5 12h5" stroke="#555" /></Ico>
            <span className="absolute left-[7px] top-[8px] w-[12px] h-[12px] rounded-full bg-[#f2c811] flex items-center justify-center">
              <Ico s={7}><path d="M.5 3.500l2 2L6.500 1" stroke="#333" /></Ico>
            </span>
          </span>
          <span className="ml-[5px]">度量值表</span>
        </div>
        {['总营收金额', '总订单量'].map((t) => (
          <div key={t} className="h-[24px] flex items-center pl-[32px]">
            <CheckBox />
            <Ico w={11} h={14} className="ml-[9px]"><rect x=".5" y=".5" width="10" height="13" stroke="#555" /><path d="M2.500 3h6M2.500 6h1M5 6h1M7.500 6h1M2.500 8.500h1M5 8.500h1M7.500 8.500h1M2.500 11h1M5 11h1M7.500 11h1" stroke="#555" /></Ico>
            <span className="ml-[6px]">{t}</span>
          </div>
        ))}
        {treeItems.map(([t, calc]) => (
          <div key={t} className="h-[24px] flex items-center">
            <Arrow />
            <span className="w-[16px] ml-[3px] flex items-center shrink-0">{calc ? <CalcTableIco /> : <TableIco />}</span>
            <span className="ml-[4px] whitespace-nowrap">{t}</span>
          </div>
        ))}
      </div>
    </div>
  );
}

function StatusBar() {
  return (
    <div className="h-[25px] bg-[#f3f2f1] border-t border-[#e1dfdd] flex items-center justify-between pl-[5px] text-[12px] text-[#555] shrink-0">
      <span>第 2 页(共 2 页)</span>
      <div className="flex items-center">
        <span className="font-bold mr-[5px]">-</span>
        <div className="relative w-[100px] h-[1px] bg-[#605e5c]">
          <span className="absolute left-[33px] top-[-5px] w-[4px] h-[11px] bg-[#605e5c]" />
          <span className="absolute left-[50px] top-[-2px] w-[1px] h-[5px] bg-[#605e5c]" />
        </div>
        <span className="ml-[6px] text-[14px] leading-[14px] w-[15px]">+</span>
        <span className="ml-[8px] w-[34px]">72%</span>
        <span className="ml-[10px] mr-[23px]">
          <Ico w={16} h={12}><rect x=".5" y=".5" width="15" height="11" stroke="#555" /><path d="M3 4.500V3h2M11 3h2v1.500M3 7.500V9h2M11 9h2V7.500" stroke="#555" /></Ico>
        </span>
      </div>
    </div>
  );
}

function Badge({ n, className }: { n: string; className: string }) {
  return (
    <div className={`absolute w-[32px] h-[32px] rounded-full bg-[#0000e6] border-[3px] border-[#f3f3f3] text-white font-bold text-[19px] font-['Liberation_Sans'] flex items-center justify-center ${className}`}>
      {n}
    </div>
  );
}

export default function App() {
  return (
    <div className="w-[1527px] h-[848px] relative overflow-hidden flex flex-col bg-[#f3f2f1] border-x border-t border-[#6e6e6e] font-['Noto_Sans','Noto_Sans_CJK_SC',sans-serif]">
      <TitleBar />
      <TabRow />
      <Ribbon />
      <div className="flex-1 flex min-h-0 border-t border-[#d2d0ce]">
        <LeftNav />
        <div className="w-[1123px] shrink-0 flex flex-col">
          <div className="flex-1 flex min-h-0">
            <Canvas />
            <FilterPanel />
          </div>
          <PageTabs />
        </div>
        <VizPanel />
        <FieldPanel />
      </div>
      <StatusBar />

      {/* annotations drawn over the screen */}
      <div className="absolute left-[80px] top-[37px] w-[40px] h-[29px] border-2 border-[#f00000]" />
      <div className="absolute left-[301px] top-[163px] w-[88px] h-[55px] border-2 border-[#f00000]" />
      <Badge n="6" className="left-[110px] top-[13px]" />
      <Badge n="8" className="left-[273px] top-[188px]" />
      <Badge n="7" className="left-[1342px] top-[284px]" />
      <svg className="absolute left-0 top-0 pointer-events-none" width="1527" height="848" viewBox="0 0 1527 848" fill="none">
        <path d="M1380 313H1468" stroke="#f00000" strokeWidth="2.500" />
        <path d="M1380 314Q1350 400 1316 470Q1296 510 1268 542" stroke="#f00000" strokeWidth="2" />
        <path d="M1263 548L1270 529L1274 536L1281 539z" fill="#f00000" />
      </svg>
    </div>
  );
}
